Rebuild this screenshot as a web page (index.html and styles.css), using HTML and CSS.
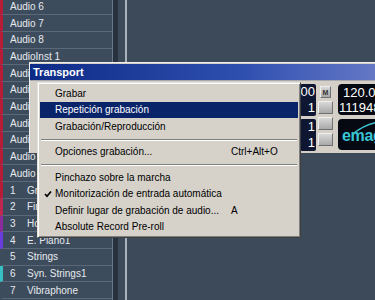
FILE: index.html
```
<!DOCTYPE html>
<html>
<head>
<meta charset="utf-8">
<link rel="stylesheet" href="styles.css">
</head>
<body>
<div class="desk">
  <div class="tracks">
    <div class="track red"><span class="name">Audio 6</span></div>
    <div class="track red"><span class="name">Audio 7</span></div>
    <div class="track red"><span class="name">Audio 8</span></div>
    <div class="track red"><span class="name">AudioInst 1</span></div>
    <div class="track red"><span class="name">Audio 9</span></div>
    <div class="track red"><span class="name">Audio 10</span></div>
    <div class="track red"><span class="name">Audio 11</span></div>
    <div class="track red"><span class="name">Audio 12</span></div>
    <div class="track red"><span class="name">Audio 13</span></div>
    <div class="track red"><span class="name">Audio 14</span></div>
    <div class="track red"><span class="name">Audio 15</span></div>
    <div class="track red"><span class="num">1</span><span class="name">Grand Piano</span></div>
    <div class="track pink"><span class="num">2</span><span class="name">Fingered Bs</span></div>
    <div class="track purple"><span class="num">3</span><span class="name">Honky-tonk</span></div>
    <div class="track violet"><span class="num">4</span><span class="name">E. Piano1</span></div>
    <div class="track none"><span class="num">5</span><span class="name">Strings</span></div>
    <div class="track cyan"><span class="num">6</span><span class="name">Syn. Strings1</span></div>
    <div class="track none"><span class="num">7</span><span class="name">Vibraphone</span></div>
  </div>
  <div class="split"></div>
  <div class="gap"></div>
  <div class="vline"></div>
  <div class="area"></div>
</div>

<div class="transport">
  <div class="tb">Transport</div>
  <div class="tbody">
    <div class="colA">
      <div class="dpanel"><div>00</div><div>1</div></div>
      <div class="dpanel"><div>1</div><div>1</div></div>
    </div>
    <div class="colB">
      <div class="btn small">M</div>
      <div class="btn"></div>
      <div class="btn"></div>
      <div class="btn"></div>
    </div>
    <div class="colC">
      <div class="lcd"><div>120.00</div><div class="l2">111948</div></div>
      <div class="lcd logo">
        <svg class="swoosh" width="40" height="20" viewBox="0 0 40 20"><path d="M16 14 Q 26 6 40 3" fill="none" stroke="#3cc4d4" stroke-width="1.6"/></svg>
        <span class="emagic">emagic</span>
      </div>
    </div>
  </div>
</div>

<div class="menu">
  <div class="mi"><span class="ck"></span><span>Grabar</span><span></span></div>
  <div class="mi hl"><span class="ck"></span><span>Repetición grabación</span><span></span></div>
  <div class="mi"><span class="ck"></span><span>Grabación/Reproducción</span><span></span></div>
  <div class="sep"></div>
  <div class="mi"><span class="ck"></span><span>Opciones grabación...</span><span>Ctrl+Alt+O</span></div>
  <div class="sep"></div>
  <div class="mi"><span class="ck"></span><span>Pinchazo sobre la marcha</span><span></span></div>
  <div class="mi"><span class="ck"><svg width="8" height="8" viewBox="0 0 8 8"><path d="M1 4 L3 6.2 L7 1.5" fill="none" stroke="#000" stroke-width="1.7"/></svg></span><span>Monitorización de entrada automática</span><span></span></div>
  <div class="mi"><span class="ck"></span><span>Definir lugar de grabación de audio...</span><span>A</span></div>
  <div class="mi"><span class="ck"></span><span>Absolute Record Pre-roll</span><span></span></div>
</div>
</body>
</html>
```
FILE: styles.css
```
body {
  margin: 0;
  width: 375px;
  height: 300px;
  overflow: hidden;
  background: #3c4a59;
  font-family: "Liberation Sans", Arial, sans-serif;
  position: relative;
}

.desk {
  display: flex;
  height: 300px;
}

.tracks {
  width: 112px;
  margin-top: -1.4px;
  background: #3d4c5c;
}

.track {
  height: 16.7px;
  box-sizing: border-box;
  border-bottom: 1px solid #5a6878;
  border-left: 3px solid transparent;
  padding-left: 7px;
  display: flex;
  align-items: center;
  color: #e6eaee;
  font-size: 10px;
  white-space: nowrap;
  overflow: hidden;
}
.track.red { border-left-color: #b41c38; }
.track.pink { border-left-color: #c02850; }
.track.purple { border-left-color: #8a2c9c; }
.track.violet { border-left-color: #6a3ce0; }
.track.cyan { border-left-color: #36c0c4; }
.track.none { border-left-color: #3d4c5c; }

.num { width: 17px; }

.split {
  width: 6px;
  background: #27323e;
  border-left: 1px solid #6a7888;
  box-sizing: border-box;
}
.gap { width: 7px; }
.vline { width: 2px; background: #a9b1ba; }
.area { flex: 1; }

.transport {
  position: absolute;
  left: 29px;
  top: 62px;
  width: 360px;
  height: 91px;
  box-sizing: border-box;
  background: #d4d0c8;
  border-top: 1px solid #eeeeee;
  border-left: 1px solid #eeeeee;
  padding-top: 1px;
}

.tb {
  height: 16px;
  background: linear-gradient(90deg, #0c2a86, #3050b0 60%, #6a7cc8);
  color: #fff;
  font-weight: bold;
  font-size: 11px;
  line-height: 16px;
  padding-left: 3px;
}

.tbody {
  display: flex;
  padding-top: 3px;
  padding-left: 270px;
  border-top: 1px solid #a8a8b0;
}

.colA {
  width: 16px;
  display: flex;
  flex-direction: column;
  gap: 3px;
}
.dpanel {
  height: 32px;
  background: #0e1632;
  color: #fff;
  font-size: 13px;
  line-height: 16px;
  text-align: right;
  border-radius: 2px;
  padding-right: 1px;
}

.colB {
  width: 15px;
  margin-left: 2px;
  display: flex;
  flex-direction: column;
  gap: 3px;
  padding-top: 2px;
}
.btn {
  height: 13px;
  box-sizing: border-box;
  background: linear-gradient(#d8d8d8, #a8a8a8);
  border: 1px solid;
  border-color: #eeeeee #707070 #707070 #eeeeee;
  font-size: 7px;
  font-weight: bold;
  color: #333;
  text-align: center;
  line-height: 11px;
}
.btn.small { height: 12px; margin: 0 2px; }

.colC {
  width: 44px;
  margin-left: 5px;
  display: flex;
  flex-direction: column;
  gap: 4px;
}
.lcd {
  height: 31px;
  background: #060912;
  border-radius: 4px 0 0 4px;
  color: #fff;
  font-size: 13px;
  line-height: 15px;
  padding-left: 5px;
  padding-top: 1px;
  box-sizing: border-box;
  white-space: nowrap;
  overflow: hidden;
}
.lcd .l2 { margin-left: -4px; }
.logo {
  position: relative;
  padding-left: 4px;
  padding-top: 9px;
}
.swoosh {
  position: absolute;
  left: 0;
  top: 0;
}
.emagic {
  color: #38c6d6;
  font-weight: bold;
  font-size: 16px;
  letter-spacing: -0.3px;
}

.menu {
  position: absolute;
  left: 37px;
  top: 82px;
  width: 264px;
  box-sizing: border-box;
  background: #d6d2ca;
  border: 1px solid;
  border-color: #e4e2dc #404040 #404040 #e4e2dc;
  box-shadow: inset 1px 1px #ffffff, inset -1px -1px #808080;
  padding: 2px 2px 2px 2px;
}

.mi {
  height: 16.5px;
  display: grid;
  grid-template-columns: 15px 176px auto;
  align-items: center;
  font-size: 10px;
  color: #000;
  white-space: nowrap;
}
.mi.hl {
  background: #0a246a;
  color: #fff;
}
.ck {
  display: flex;
  justify-content: center;
  align-items: center;
}

.sep {
  height: 0;
  margin: 4px 1px 3px;
  border-top: 1px solid #808080;
  border-bottom: 1px solid #ffffff;
}
```
